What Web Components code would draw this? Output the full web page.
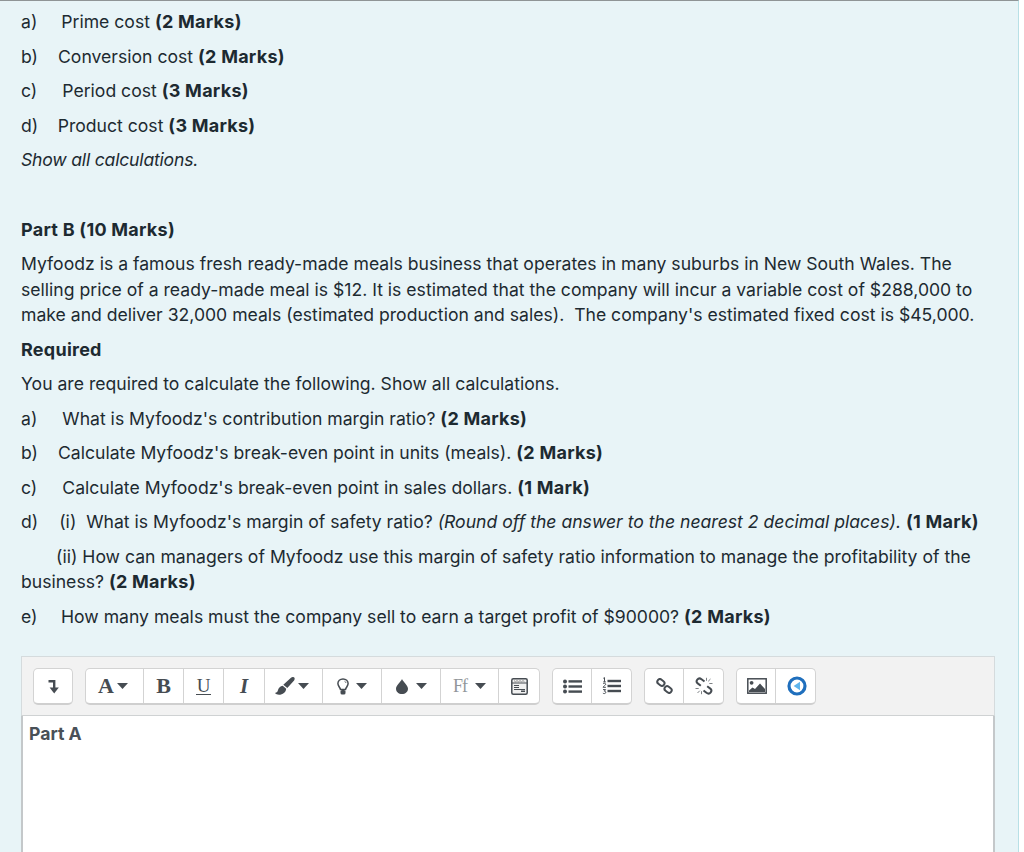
<!DOCTYPE html>
<html>
<head>
<meta charset="utf-8">
<title>Question</title>
<style>
  html, body { margin: 0; padding: 0; background: #fff; }
  body { height: 852px; overflow: hidden; }
</style>
</head>
<body>
<question-panel>
  <q-line>a)<s-p w="24"></s-p>Prime cost <b>(2 Marks)</b></q-line>
  <q-line>b)<s-p w="20"></s-p>Conversion cost <b>(2 Marks)</b></q-line>
  <q-line>c)<s-p w="25"></s-p>Period cost <b>(3 Marks)</b></q-line>
  <q-line>d)<s-p w="19.500"></s-p>Product cost <b>(3 Marks)</b></q-line>
  <q-line><i style="letter-spacing:-.2px">Show all calculations.</i></q-line>
  <q-line gap="35"><b>Part B (10 Marks)</b></q-line>
  <q-line>Myfoodz is a famous fresh ready-made meals business that operates in many suburbs in New South Wales. The selling price of a ready-made meal is $12. It is estimated that the company will incur a variable cost of $288,000 to make and deliver 32,000 meals (estimated production and sales).&nbsp; The company's estimated fixed cost is $45,000.</q-line>
  <q-line><b>Required</b></q-line>
  <q-line>You are required to calculate the following. Show all calculations.</q-line>
  <q-line>a)<s-p w="25"></s-p>What is Myfoodz's contribution margin ratio? <b>(2 Marks)</b></q-line>
  <q-line>b)<s-p w="20"></s-p>Calculate Myfoodz's break-even point in units (meals). <b>(2 Marks)</b></q-line>
  <q-line>c)<s-p w="25"></s-p>Calculate Myfoodz's break-even point in sales dollars. <b>(1 Mark)</b></q-line>
  <q-line>d)<s-p w="21"></s-p>(i)&nbsp; What is Myfoodz's margin of safety ratio? <i>(Round off the answer to the nearest 2 decimal places).</i> <b>(1 Mark)</b></q-line>
  <q-line><s-p w="35"></s-p>(ii) How can managers of Myfoodz use this margin of safety ratio information to manage the profitability of the business? <b>(2 Marks)</b></q-line>
  <q-line>e)<s-p w="23.500"></s-p>How many meals must the company sell to earn a target profit of $90000? <b>(2 Marks)</b></q-line>

  <answer-editor>
    <tool-group>
      <tool-btn icon="collapse"></tool-btn>
    </tool-group>
    <tool-group>
      <tool-btn icon="fontA" caret></tool-btn>
      <tool-btn icon="bold"></tool-btn>
      <tool-btn icon="underline"></tool-btn>
      <tool-btn icon="italic"></tool-btn>
      <tool-btn icon="brush" caret></tool-btn>
      <tool-btn icon="bulb" caret></tool-btn>
      <tool-btn icon="drop" caret></tool-btn>
      <tool-btn icon="ff" caret></tool-btn>
      <tool-btn icon="table"></tool-btn>
    </tool-group>
    <tool-group>
      <tool-btn icon="ul"></tool-btn>
      <tool-btn icon="ol"></tool-btn>
    </tool-group>
    <tool-group>
      <tool-btn icon="link"></tool-btn>
      <tool-btn icon="unlink"></tool-btn>
    </tool-group>
    <tool-group>
      <tool-btn icon="image"></tool-btn>
      <tool-btn icon="media"></tool-btn>
    </tool-group>
    <b slot="content">Part A</b>
  </answer-editor>
</question-panel>

<script>
class QuestionPanel extends HTMLElement {
  constructor() {
    super();
    this.attachShadow({ mode: 'open' });
    this.shadowRoot.innerHTML = `
      <style>
        :host {
          display: block;
          box-sizing: border-box;
          width: 1019px;
          height: 852px;
          overflow: hidden;
          padding: 8px 23px 0 21px;
          background: #e8f4f7;
          border-top: 1px solid #8f9496;
          border-right: 1px solid #b8e0e6;
          color: #1d2a31;
          font: 17.6px/25.5px Inter, "Liberation Sans", sans-serif;
        }
      </style>
      <slot></slot>
    `;
  }
}

class QLine extends HTMLElement {
  constructor() {
    super();
    this.attachShadow({ mode: 'open' });
    const gap = this.getAttribute('gap') || 0;
    this.shadowRoot.innerHTML = `
      <style>
        :host { display: block; margin-bottom: 9px; }
        .gap { height: ${gap}px; }
        ::slotted(b) { font-size: 18px; letter-spacing: .25px; }
      </style>
      <div class="gap"></div><slot></slot>
    `;
  }
}

// inline spacer, the source text lines up its labels with runs of spaces
class SP extends HTMLElement {
  constructor() {
    super();
    this.attachShadow({ mode: 'open' });
    this.shadowRoot.innerHTML = `<style>:host { display: inline-block; width: ${this.getAttribute('w')}px; }</style>`;
  }
}

class AnswerEditor extends HTMLElement {
  constructor() {
    super();
    this.attachShadow({ mode: 'open' });
    this.shadowRoot.innerHTML = `
      <style>
        :host { display: block; margin-top: 27px; }
        .bar {
          display: flex;
          align-items: flex-start;
          gap: 12px;
          box-sizing: border-box;
          height: 60px;
          padding: 11px 11px 0;
          background: #f2f2f2;
          border: 1px solid #d5dbdd;
          border-bottom: 1px solid #cfd2d3;
        }
        .content {
          box-sizing: border-box;
          height: 200px;
          padding: 5px 6px;
          background: #fff;
          border-left: 2px solid #c4c8ca;
          border-right: 2px solid #c4c8ca;
          color: #495057;
        }
      </style>
      <div class="bar"><slot></slot></div>
      <div class="content"><slot name="content"></slot></div>
    `;
  }
}

class ToolGroup extends HTMLElement {
  constructor() {
    super();
    this.attachShadow({ mode: 'open' });
    this.shadowRoot.innerHTML = `
      <style>
        :host {
          display: flex;
          box-sizing: border-box;
          height: 37px;
          background: #fff;
          border: 1px solid #d3d3d3;
          border-bottom: 2px solid #cfcfcf;
          border-radius: 5px;
          overflow: hidden;
        }
      </style>
      <slot></slot>
    `;
  }
}

const STROKE = '#464c52';
const ICONS = {
  collapse: { w: 38, svg: `<svg width="12" height="15" viewBox="0 0 12 15"><path d="M1.500 2.200h5.700v8" fill="none" stroke="${STROKE}" stroke-width="2.400"/><path d="M2.600 8.600h9.200L7.200 14.500z" fill="${STROKE}"/></svg>` },
  fontA: { w: 58, gap: 3, pad: 3, svg: `<span style="font:bold 22px 'Liberation Serif',serif;color:${STROKE}">A</span>` },
  bold: { w: 40, svg: `<span style="font:bold 22px 'Liberation Serif',serif;color:${STROKE}">B</span>` },
  underline: { w: 40, svg: `<span style="font:19px 'Liberation Serif',serif;color:${STROKE};border-bottom:1.500px solid ${STROKE};line-height:17px;padding:0 1px">U</span>` },
  italic: { w: 41, svg: `<span style="font:italic bold 21px 'Liberation Serif',serif;color:${STROKE}">I</span>` },
  brush: { w: 58, gap: 3, pad: 3, svg: `<svg width="20" height="18" viewBox="0 0 20 18"><path d="M18.800.3c1.200.6 1.100 2 .3 3.200L12.300 11 8.300 7.800 15.700 1C16.700.1 17.800-.2 18.800.3z" fill="${STROKE}"/><path d="M7.700 8.700 11.200 11.700c-.3 3.500-3.400 6-7.200 6C2.200 17.700.9 17 0 16c2-.3 2.500-1.200 3-2.900.6-2.200 2.300-4 4.700-4.400z" fill="${STROKE}"/></svg>` },
  bulb: { w: 59, gap: 7, svg: `<svg width="12" height="17" viewBox="0 0 12 17"><path d="M6 .9C3 .9.900 3 .900 5.600c0 2.500 2.200 3.800 2.600 6h5c.4-2.200 2.600-3.500 2.600-6C11.100 3 9 .9 6 .9z" fill="none" stroke="${STROKE}" stroke-width="1.500"/><path d="M7.500 3.200c.8.300 1.300.9 1.500 1.700" fill="none" stroke="${STROKE}" stroke-width=".8"/><rect x="3.500" y="12" width="5" height="4.600" rx="1.600" fill="${STROKE}"/></svg>` },
  drop: { w: 59, gap: 8, svg: `<svg width="12" height="15" viewBox="0 0 12 15"><path d="M6 0C7.300 3 12 6.300 12 9.700 12 12.800 9.300 15 6 15S0 12.800 0 9.700C0 6.300 4.700 3 6 0z" fill="${STROKE}"/></svg>` },
  ff: { w: 58, gap: 8, svg: `<span style="font:18px 'Liberation Serif',serif;color:#92969a;letter-spacing:-1px">Ff</span>` },
  table: { w: 40, svg: `<svg width="17" height="17" viewBox="0 0 17 17"><rect x=".8" y=".8" width="15.400" height="15.400" rx="1.500" fill="#f1f1f1" stroke="${STROKE}" stroke-width="1.500"/><path d="M1 5h15" stroke="${STROKE}" stroke-width="1"/><path d="M3 2.600l1.500 1.200 1.500-1.200 1.500 1.200 1.500-1.200 1.500 1.200 1.500-1.200 1.500 1.200" fill="none" stroke="#777" stroke-width=".8"/><path d="M3 7.500h5M3 9.500h5M3 11.500h11" stroke="${STROKE}" stroke-width="1"/><rect x="10" y="12.500" width="4" height="1.500" fill="${STROKE}"/></svg>` },
  ul: { w: 39, svg: `<svg width="19" height="15" viewBox="0 0 19 15"><g fill="${STROKE}"><circle cx="2" cy="2.500" r="2"/><circle cx="2" cy="7.500" r="2"/><circle cx="2" cy="12.500" r="2"/><rect x="5.500" y="1.200" width="13.500" height="2.400"/><rect x="5.500" y="6.300" width="13.500" height="2.400"/><rect x="5.500" y="11.400" width="13.500" height="2.400"/></g></svg>` },
  ol: { w: 39, svg: `<svg width="19" height="18" viewBox="0 0 19 18"><g fill="${STROKE}"><rect x="5.500" y="2.800" width="13.500" height="2.400"/><rect x="5.500" y="7.800" width="13.500" height="2.400"/><rect x="5.500" y="12.800" width="13.500" height="2.400"/></g><g fill="none" stroke="${STROKE}" stroke-width="1"><path d="M1.300 1.300 2.500.6v4.200M1.200 4.900h2.700"/><path d="M1 7c.5-1 2.700-1 2.700.3 0 1-2.500 1.800-2.600 3h2.800"/><path d="M1 12.600h2.600l-1.300 1.600c1 0 1.500.5 1.500 1.200 0 1.300-2.200 1.500-2.900.7"/></g></svg>` },
  link: { w: 39, svg: `<svg width="17" height="16" viewBox="0 0 17 16"><g fill="none" stroke="${STROKE}" stroke-width="2"><rect x="-3.800" y="-2.600" width="7.600" height="5.200" rx="2.600" transform="translate(4.900 4.500) rotate(38)"/><rect x="-3.800" y="-2.600" width="7.600" height="5.200" rx="2.600" transform="translate(12.100 11.500) rotate(38)"/></g></svg>` },
  unlink: { w: 39, svg: `<svg width="18" height="18" viewBox="0 0 18 18"><g fill="none" stroke="${STROKE}" stroke-width="2"><path d="M9.500 4.500 6.500 2.200C5 1.100 3.200 1.500 2.300 2.700S1.500 5.500 2.700 6.400L5.800 8.800"/><path d="M8.500 13.500l3 2.300c1.500 1.100 3.300.7 4.200-.5s.8-2.800-.4-3.700l-3.100-2.400"/></g><path d="M11.500 .8v3M15.500 2l-2.300 2.300M17.500 6.500h-3.200M.5 11.500h3.200M2.500 16l2.300-2.300M6.500 17.200v-3" stroke="#6f7478" stroke-width=".9"/></svg>` },
  image: { w: 39, lpad: 2, svg: `<svg width="20" height="16" viewBox="0 0 20 16"><rect x=".8" y=".8" width="18.400" height="14.400" fill="#fff" stroke="${STROKE}" stroke-width="1.500"/><circle cx="4.600" cy="4.800" r="1.900" fill="${STROKE}"/><path d="M2 14v-1.500L5.500 9.500l2.500 1.500 5-5.500 5 5.500v3z" fill="${STROKE}"/></svg>` },
  media: { w: 39, lpad: 2, svg: `<svg width="20" height="20" viewBox="0 0 20 20"><circle cx="10" cy="10" r="8" fill="#fff" stroke="#1f6fbd" stroke-width="3.200"/><path d="M13 5.800v8.400L6.600 10z" fill="#5fb5ec"/></svg>` }
};

class ToolBtn extends HTMLElement {
  constructor() {
    super();
    this.attachShadow({ mode: 'open' });
    const icon = ICONS[this.getAttribute('icon')];
    const caret = this.hasAttribute('caret')
      ? `<svg class="caret" width="11" height="6" viewBox="0 0 11 6"><path d="M0 0h11L5.500 6z" fill="${STROKE}"/></svg>` : '';
    this.shadowRoot.innerHTML = `
      <style>
        :host {
          display: flex;
          align-items: center;
          justify-content: center;
          gap: ${icon.gap || 6}px;
          box-sizing: border-box;
          width: ${icon.w}px;
          height: 34px;
          padding: 0 ${icon.pad || 0}px 0 ${icon.lpad || 0}px;
          border-right: 1px solid #d3d3d3;
          line-height: 1;
        }
        :host(:last-child) { border-right: 0; }
      </style>
      ${icon.svg}${caret}
    `;
  }
}

customElements.define('question-panel', QuestionPanel);
customElements.define('q-line', QLine);
customElements.define('s-p', SP);
customElements.define('answer-editor', AnswerEditor);
customElements.define('tool-group', ToolGroup);
customElements.define('tool-btn', ToolBtn);
</script>
</body>
</html>
